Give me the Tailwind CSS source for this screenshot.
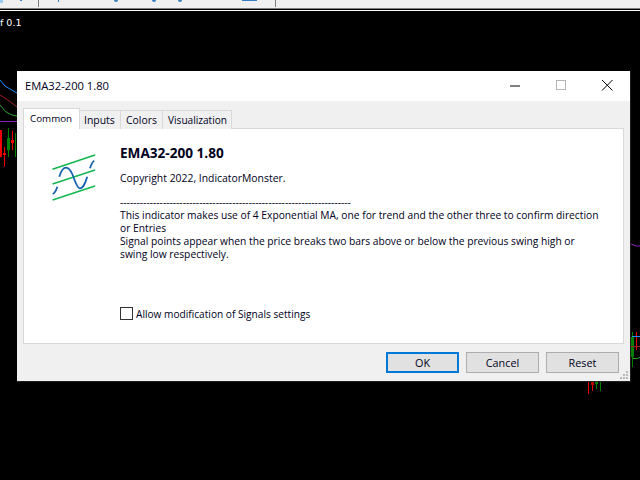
<!DOCTYPE html>
<html lang="en">
<head>
  <meta charset="UTF-8">
  <script src="https://cdn.jsdelivr.net/npm/@tailwindcss/browser@4"></script>
  <title>EMA32-200 1.80</title>
</head>
<body class="bg-black">
  <div class="relative w-[640px] h-[480px] overflow-hidden bg-black font-['Open_Sans',sans-serif] text-[10.4px] text-black">
    <!-- terminal toolbar -->
    <div class="relative h-[8px] bg-[#f0f0f0]">
      <div class="absolute left-[38px] top-0 w-px h-[7px] bg-[#808080]"></div>
      <div class="absolute left-[275px] top-0 w-px h-[7px] bg-[#808080]"></div>
      <div class="absolute left-0 top-0 w-[3px] h-[3px] bg-[#99ccee]"></div>
      <div class="absolute left-[20px] top-0 w-[2px] h-[1px] bg-[#3a7fc0]"></div>
      <div class="absolute left-[58px] top-0 w-px h-[2px] bg-[#3a7fc0]"></div>
      <div class="absolute left-[114px] top-0 w-[4px] h-[2px] rounded-b-full bg-[#3a7fc0]"></div>
      <div class="absolute left-[152px] top-0 w-[4px] h-[2px] rounded-b-full bg-[#3a7fc0]"></div>
      <div class="absolute left-[178px] top-0 w-[4px] h-[2px] rounded-b-full bg-[#3a7fc0]"></div>
      <div class="absolute left-[242px] top-0 w-[15px] h-[1px] bg-[#3a7fc0]"></div>
    </div>
    <div class="h-px bg-[#808080]"></div>
    <div class="h-px mt-px bg-white"></div>
    <div class="pt-[4px] text-[9.500px] leading-[16px] text-white font-['DejaVu_Sans',sans-serif]">f 0.1</div>

    <!-- chart behind the dialog -->
    <svg class="absolute left-0 top-0" width="640" height="480" fill="none">
      <polyline points="0,80 5,86 10,89 17,93" stroke="#1e90ff"/>
      <polyline points="0,95 8,100 17,107" stroke="#a01c28"/>
      <polyline points="0,105 6,112 12,115 17,116" stroke="#32a032"/>
      <polyline points="0,121.5 17,121.5" stroke="#8a1fc0"/>
      <rect x="0" y="130" width="2" height="27" fill="#f00000"/>
      <path d="M4.500 147V167M12.500 131V150" stroke="#f00000"/>
      <rect x="3" y="153" width="3" height="2" fill="#f00000"/>
      <path d="M8.500 128V157M15.500 133V157" stroke="#008000"/>
      <rect x="7" y="138" width="3" height="12" fill="#008000"/>
      <rect x="11" y="140" width="3" height="3" fill="#f00000"/>
      <polyline points="631,244 636,246 640,246" stroke="#8a1fc0"/>
      <path d="M632.500 332V367M600.500 381V391M596.500 381V389" stroke="#008000"/>
      <rect x="631" y="337" width="3" height="20" fill="#008000"/>
      <path d="M636.500 332V350M588.500 381V394M592.500 381V391" stroke="#f00000"/>
      <rect x="591" y="381" width="3" height="4" fill="#c00000"/>
      <rect x="595" y="381" width="3" height="3" fill="#008000"/>
      <path d="M632 336.500h8" stroke="#1e90ff"/>
      <path d="M630 346.500h10" stroke="#a01c28"/>
      <path d="M633 358.500h4l3-1" stroke="#32a032"/>
    </svg>

    <!-- properties dialog -->
    <div class="absolute left-[17px] top-[71px] w-[614px] h-[311px] flex flex-col bg-[#f0f0f0] border-r border-b border-[#202020]">
      <div class="h-[30px] bg-white flex items-center shrink-0">
        <span class="pl-[8px] text-[11.2px] text-[#000020]">EMA32-200 1.80</span>
        <div class="ml-auto flex items-center">
          <svg width="46" height="30" fill="none"><path d="M18 15h10" stroke="#000"/></svg>
          <svg width="46" height="30" fill="none"><rect x="18.500" y="9.500" width="9" height="9" stroke="#b4b4b4"/></svg>
          <svg width="46" height="30" fill="none"><path d="M18 9l10.500 10.500M28.500 9L18 19.500" stroke="#000"/></svg>
        </div>
      </div>

      <div class="flex flex-col px-[6px] pt-[7px] grow">
        <!-- tabs -->
        <div class="flex items-end h-[21px] text-[#000020] relative z-10 -mb-px">
          <div class="w-[57px] h-[21px] pl-[6px] pt-px text-[9.800px] bg-white border border-b-0 border-[#d9d9d9] leading-[17px]">Common</div>
          <div class="w-[42px] h-[19px] -ml-px pl-[4px] bg-[#f0f0f0] border border-b-0 border-[#d9d9d9] leading-[18px]">Inputs</div>
          <div class="w-[43px] h-[19px] -ml-px pl-[5px] bg-[#f0f0f0] border border-b-0 border-[#d9d9d9] leading-[18px]">Colors</div>
          <div class="w-[70px] h-[19px] -ml-px pl-[5px] text-[10.100px] bg-[#f0f0f0] border border-b-0 border-[#d9d9d9] leading-[18px]">Visualization</div>
        </div>

        <!-- common tab -->
        <div class="h-[216px] w-[601px] bg-white border border-[#d9d9d9] flex">
          <div class="w-[96px] shrink-0 pl-[28px] pt-[24px]">
            <svg width="44" height="48" fill="none">
              <path d="M0.500 16.300L43 2M0.500 31L43 17M0.500 47L43 33" stroke="#12b84e" stroke-width="1.600"/>
              <path d="M0.700 41C3 40 4.300 37 5.300 33.700M7.300 23.700C9 18 11 14.700 14 14.700C17 14.700 19 18 20.700 22C23 28 25 35.300 28 35.300C31.500 35.300 33.500 29 35.300 23.700M38 15.300C39 12 40.500 8.500 42.300 7.700" stroke="#1763b0" stroke-width="1.800"/>
            </svg>
          </div>
          <div class="flex flex-col grow pt-[15px] text-[#000020] leading-[13px]">
            <div class="font-bold text-[13.6px] leading-[18px]">EMA32-200 1.80</div>
            <div class="mt-[10px]">Copyright 2022, IndicatorMonster.</div>
            <div class="mt-[11px] w-[490px] h-[65px] text-[10.250px]">
              ----------------------------------------------------------------------<br>
              This indicator makes use of 4 Exponential MA, one for trend and the other three to confirm direction<br>
              or Entries<br>
              Signal points appear when the price breaks two bars above or below the previous swing high or<br>
              swing low respectively.
            </div>
            <label class="mt-[46px] flex items-center h-[13px]">
              <span class="w-[13px] h-[13px] border border-[#333] bg-white"></span>
              <span class="ml-[3px] pt-[1px] text-[10.150px]">Allow modification of Signals settings</span>
            </label>
          </div>
        </div>

        <!-- buttons -->
        <div class="flex justify-end gap-[7px] pt-[8px] pr-[5px] text-[10.8px] text-[#000020]">
          <button class="w-[73px] h-[21px] bg-[#e1e1e1] border-2 border-[#0078d7] leading-[16px]">OK</button>
          <button class="w-[73px] h-[21px] bg-[#e1e1e1] border border-[#adadad] leading-[18px]">Cancel</button>
          <button class="w-[73px] h-[21px] bg-[#e1e1e1] border border-[#adadad] leading-[18px]">Reset</button>
        </div>
      </div>

      <!-- size grip -->
      <svg class="absolute right-[1px] bottom-[1px]" width="9" height="9" fill="#b8b8b8">
        <rect x="6" y="0" width="2" height="2"/><rect x="3" y="3" width="2" height="2"/><rect x="6" y="3" width="2" height="2"/>
        <rect x="0" y="6" width="2" height="2"/><rect x="3" y="6" width="2" height="2"/><rect x="6" y="6" width="2" height="2"/>
      </svg>
    </div>
  </div>
</body>
</html>
